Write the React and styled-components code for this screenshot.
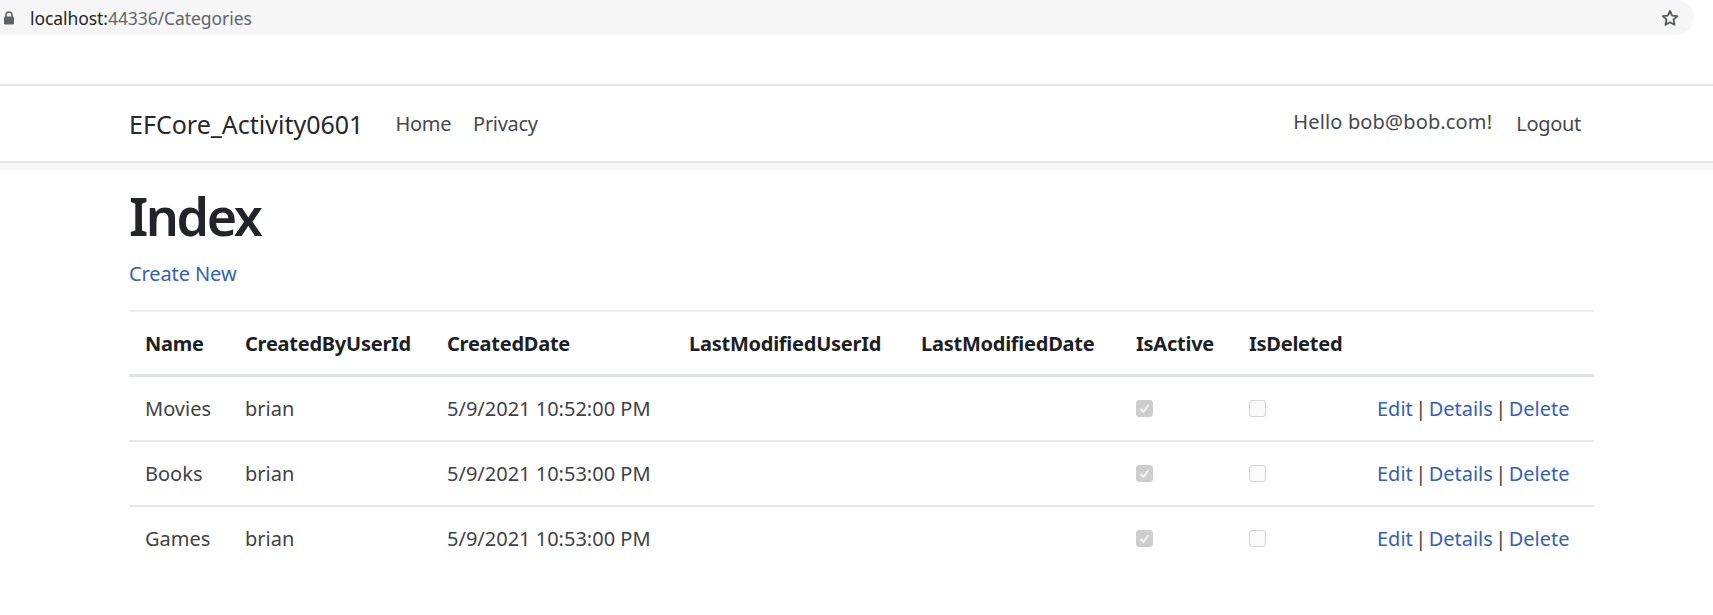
import styled, { createGlobalStyle } from "styled-components";

const GlobalStyle = createGlobalStyle`
  html, body {
    margin: 0;
    padding: 0;
    background: #fff;
    overflow: hidden;
  }
  body {
    font-family: "Noto Sans", "Open Sans", "Liberation Sans", sans-serif;
    color: #212529;
  }
`;

const AddressBar = styled.div`
  width: 1694px;
  height: 35px;
  background: #f5f6f5;
  border-radius: 0 18px 18px 0;
  display: flex;
  align-items: center;
  padding: 0 14px 0 3px;
  box-sizing: border-box;
`;

const Url = styled.div`
  margin-left: 15px;
  font-size: 17.5px;
  letter-spacing: -0.07px;
  color: #60656a;
  flex: 1;
  span {
    color: #22252a;
  }
`;

const Spacer = styled.div`
  height: 47px;
  border-bottom: 2px solid #e3e4e5;
  margin-top: 2px;
`;

const Nav = styled.nav`
  height: 75px;
  padding: 0 132px 0 129px;
  border-bottom: 2px solid #e5e6e7;
  display: flex;
  align-items: center;
`;

const Brand = styled.a`
  font-size: 25px;
  color: #25282c;
`;

const NavLink = styled.a`
  font-size: 20px;
  letter-spacing: -0.3px;
  color: #45484c;
  margin-left: ${(p) => p.$gap}px;
`;

const Hello = styled.span`
  margin-left: auto;
  font-size: 20px;
  letter-spacing: 0.15px;
  color: #45484c;
  position: relative;
  top: -2px;
`;

const Band = styled.div`
  height: 7px;
  background: #f7f7f7;
`;

const Main = styled.main`
  padding: 0 119px 0 129px;
`;

const Title = styled.h1`
  margin: 0;
  padding-top: 13px;
  font-size: 52px;
  line-height: 66px;
  font-weight: 600;
  letter-spacing: -2.4px;
  color: #212529;
`;

const CreateLink = styled.a`
  display: block;
  margin-top: 10px;
  font-size: 20px;
  line-height: 30px;
  letter-spacing: -0.1px;
  color: #3461b4;
`;

const Table = styled.table`
  width: 1465px;
  margin-top: 21px;
  border-collapse: collapse;
  table-layout: fixed;
  font-size: 20px;
`;

const HeadCell = styled.th`
  height: 62px;
  padding: 0 0 0 16px;
  text-align: left;
  font-weight: 700;
  font-size: 20px;
  letter-spacing: -0.25px;
  color: #1c1f23;
  border-top: 2px solid #eceded;
  border-bottom: 3px solid #dfe1e3;
  white-space: nowrap;
`;

const Cell = styled.td`
  height: 63px;
  padding: 0 0 0 16px;
  color: #3f4246;
  border-bottom: 2px solid #e8e9ea;
  white-space: nowrap;
`;

const ActionCell = styled(Cell)`
  color: #4a4238;
  word-spacing: -2.8px;
`;

const LastRow = styled.tr`
  td {
    border-bottom: none;
  }
`;

const ActionLink = styled.a`
  color: #3461b4;
`;

const Check = styled.span`
  display: inline-flex;
  align-items: center;
  justify-content: center;
  width: 17px;
  height: 17px;
  box-sizing: border-box;
  border-radius: 3px;
  vertical-align: middle;
  position: relative;
  top: -2px;
  background: ${(p) => (p.$checked ? "#cdcdcd" : "#fafafa")};
  border: 1px solid ${(p) => (p.$checked ? "#cdcdcd" : "#d4d4d4")};
`;

const LockIcon = () => (
  <svg width="12" height="14" viewBox="0 0 12 14">
    <path
      d="M3 6V4a3 3 0 0 1 6 0v2"
      fill="none"
      stroke="#5f6368"
      strokeWidth="1.6"
    />
    <rect x="1" y="5.5" width="10" height="8" rx="1.2" fill="#5f6368" />
  </svg>
);

const StarIcon = () => (
  <svg width="20" height="20" viewBox="0 0 24 24">
    <path
      d="M12 3.5l2.6 5.6 6.1.7-4.5 4.2 1.2 6.1L12 17.1l-5.4 3 1.2-6.1-4.5-4.2 6.1-.7z"
      fill="none"
      stroke="#54585c"
      strokeWidth="2.2"
      strokeLinejoin="round"
    />
  </svg>
);

const CheckBox = ({ checked }) => (
  <Check $checked={checked}>
    {checked && (
      <svg width="13" height="13" viewBox="0 0 13 13">
        <path d="M2.5 7l3 3 5-7" fill="none" stroke="#f2f2f2" strokeWidth="2" />
      </svg>
    )}
  </Check>
);

const columns = [100, 202, 242, 232, 215, 113, 128, 233];
const headers = [
  "Name",
  "CreatedByUserId",
  "CreatedDate",
  "LastModifiedUserId",
  "LastModifiedDate",
  "IsActive",
  "IsDeleted",
  "",
];
const rows = [
  { name: "Movies", date: "5/9/2021 10:52:00 PM" },
  { name: "Books", date: "5/9/2021 10:53:00 PM" },
  { name: "Games", date: "5/9/2021 10:53:00 PM" },
];

const RowCells = ({ row }) => (
  <>
    <Cell>{row.name}</Cell>
    <Cell>brian</Cell>
    <Cell>{row.date}</Cell>
    <Cell />
    <Cell />
    <Cell>
      <CheckBox checked />
    </Cell>
    <Cell>
      <CheckBox />
    </Cell>
    <ActionCell>
      <ActionLink>Edit</ActionLink> | <ActionLink>Details</ActionLink> |{" "}
      <ActionLink>Delete</ActionLink>
    </ActionCell>
  </>
);

const App = () => {
  return (
    <>
      <GlobalStyle />
      <AddressBar>
        <LockIcon />
        <Url>
          <span>localhost:</span>44336/Categories
        </Url>
        <StarIcon />
      </AddressBar>
      <Spacer />
      <Nav>
        <Brand>EFCore_Activity0601</Brand>
        <NavLink $gap={32}>Home</NavLink>
        <NavLink $gap={22}>Privacy</NavLink>
        <Hello>Hello bob@bob.com!</Hello>
        <NavLink $gap={24}>Logout</NavLink>
      </Nav>
      <Band />
      <Main>
        <Title>Index</Title>
        <CreateLink>Create New</CreateLink>
        <Table>
          <colgroup>
            {columns.map((w, i) => (
              <col key={i} width={w} />
            ))}
          </colgroup>
          <thead>
            <tr>
              {headers.map((h, i) => (
                <HeadCell key={i}>{h}</HeadCell>
              ))}
            </tr>
          </thead>
          <tbody>
            {rows.map((row, i) =>
              i === rows.length - 1 ? (
                <LastRow key={row.name}>
                  <RowCells row={row} />
                </LastRow>
              ) : (
                <tr key={row.name}>
                  <RowCells row={row} />
                </tr>
              )
            )}
          </tbody>
        </Table>
      </Main>
    </>
  );
};

export default App;
